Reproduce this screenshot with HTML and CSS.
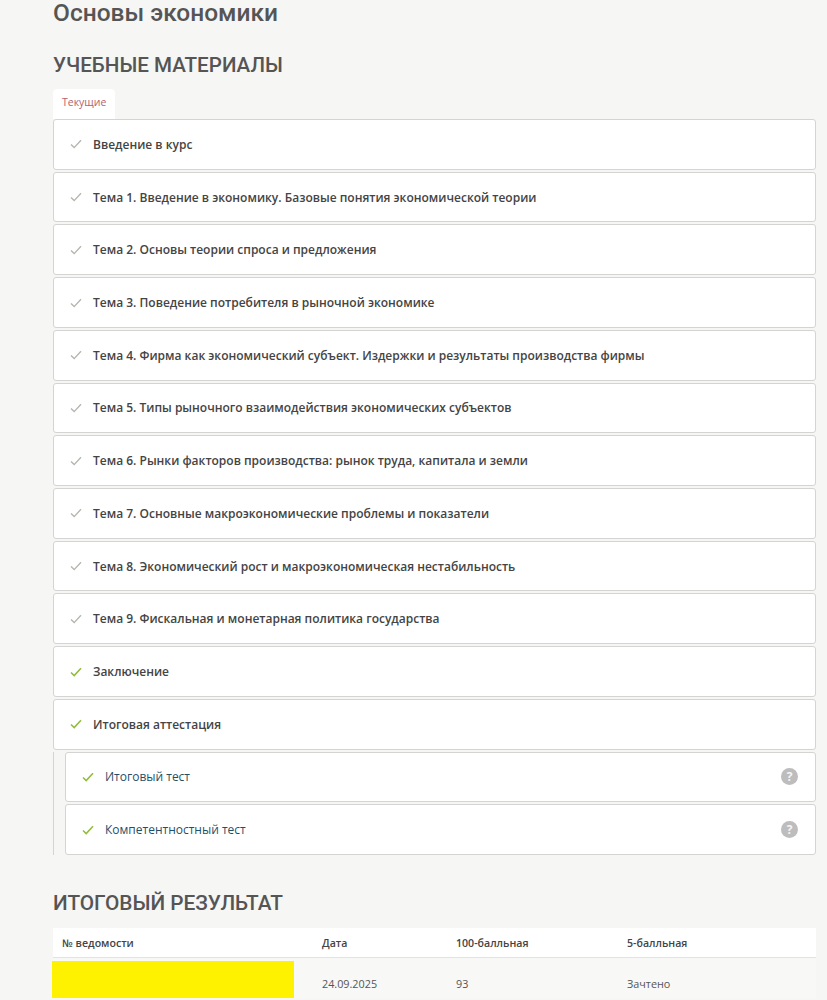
FILE: index.html
```html
<!DOCTYPE html>
<html lang="ru">
<head>
    <meta charset="UTF-8">
    <title>Основы экономики</title>
    <link rel="stylesheet" href="styles.css">
</head>
<body>
    <div class="page">
        <h1>Основы экономики</h1>
        <h2 class="materials-title">УЧЕБНЫЕ МАТЕРИАЛЫ</h2>
        <div class="tabs"><span class="tab">Текущие</span></div>

        <div class="topics">
            <div class="topic"><svg class="check" viewBox="0 0 12 10"><path d="M1 5.5 4.2 8.6 11 1.2"/></svg>Введение в курс</div>
            <div class="topic"><svg class="check" viewBox="0 0 12 10"><path d="M1 5.5 4.2 8.6 11 1.2"/></svg>Тема 1. Введение в экономику. Базовые понятия экономической теории</div>
            <div class="topic"><svg class="check" viewBox="0 0 12 10"><path d="M1 5.5 4.2 8.6 11 1.2"/></svg>Тема 2. Основы теории спроса и предложения</div>
            <div class="topic"><svg class="check" viewBox="0 0 12 10"><path d="M1 5.5 4.2 8.6 11 1.2"/></svg>Тема 3. Поведение потребителя в рыночной экономике</div>
            <div class="topic"><svg class="check" viewBox="0 0 12 10"><path d="M1 5.5 4.2 8.6 11 1.2"/></svg>Тема 4. Фирма как экономический субъект. Издержки и результаты производства фирмы</div>
            <div class="topic"><svg class="check" viewBox="0 0 12 10"><path d="M1 5.5 4.2 8.6 11 1.2"/></svg>Тема 5. Типы рыночного взаимодействия экономических субъектов</div>
            <div class="topic"><svg class="check" viewBox="0 0 12 10"><path d="M1 5.5 4.2 8.6 11 1.2"/></svg>Тема 6. Рынки факторов производства: рынок труда, капитала и земли</div>
            <div class="topic"><svg class="check" viewBox="0 0 12 10"><path d="M1 5.5 4.2 8.6 11 1.2"/></svg>Тема 7. Основные макроэкономические проблемы и показатели</div>
            <div class="topic"><svg class="check" viewBox="0 0 12 10"><path d="M1 5.5 4.2 8.6 11 1.2"/></svg>Тема 8. Экономический рост и макроэкономическая нестабильность</div>
            <div class="topic"><svg class="check" viewBox="0 0 12 10"><path d="M1 5.5 4.2 8.6 11 1.2"/></svg>Тема 9. Фискальная и монетарная политика государства</div>
            <div class="topic"><svg class="check done" viewBox="0 0 12 10"><path d="M1 5.5 4.2 8.6 11 1.2"/></svg>Заключение</div>
            <div class="topic"><svg class="check done" viewBox="0 0 12 10"><path d="M1 5.5 4.2 8.6 11 1.2"/></svg>Итоговая аттестация</div>
            <div class="subtopics">
                <div class="topic sub"><svg class="check done" viewBox="0 0 12 10"><path d="M1 5.5 4.2 8.6 11 1.2"/></svg>Итоговый тест<span class="help">?</span></div>
                <div class="topic sub"><svg class="check done" viewBox="0 0 12 10"><path d="M1 5.5 4.2 8.6 11 1.2"/></svg>Компетентностный тест<span class="help">?</span></div>
            </div>
        </div>

        <h2 class="result-title">ИТОГОВЫЙ РЕЗУЛЬТАТ</h2>
        <table class="results">
            <thead>
                <tr>
                    <th class="col-num">№ ведомости</th>
                    <th class="col-date">Дата</th>
                    <th class="col-hundred">100-балльная</th>
                    <th>5-балльная</th>
                </tr>
            </thead>
            <tbody>
                <tr>
                    <td class="hidden-cell"><div class="marker"></div></td>
                    <td>24.09.2025</td>
                    <td>93</td>
                    <td>Зачтено</td>
                </tr>
            </tbody>
        </table>
    </div>
</body>
</html>
```

FILE: styles.css
```css
html, body {
    height: 1000px;
    overflow: hidden;
}

body {
    margin: 0;
    font-family: "Open Sans", sans-serif;
    background-color: #f6f6f4;
    color: #444;
}

.page {
    padding: 0 11px 0 53px;
}

h1 {
    margin: 0;
    font-family: Roboto, sans-serif;
    font-size: 24.5px;
    line-height: 26px;
    font-weight: 500;
    color: #555;
}

h2 {
    margin: 0;
    font-family: Roboto, sans-serif;
    line-height: 26px;
    font-weight: 500;
    color: #555;
}

.materials-title {
    margin-top: 26px;
    font-size: 20.6px;
}

.tabs {
    display: flex;
    margin-top: 11px;
    height: 30px;
}

.tab {
    width: 62px;
    height: 30px;
    box-sizing: border-box;
    padding-left: 9px;
    font-size: 10.5px;
    line-height: 26px;
    color: #b5626c;
    background-color: #fff;
    border-radius: 4px 4px 0 0;
}

.topics {
    display: flex;
    flex-direction: column;
    gap: 2px;
}

.topic {
    display: flex;
    align-items: center;
    height: 50.72px;
    box-sizing: border-box;
    padding-left: 16px;
    font-size: 12px;
    font-weight: 600;
    color: #444;
    background-color: #fff;
    border: 1px solid #d4d4d2;
    border-radius: 3px;
}

.check {
    width: 12px;
    height: 10px;
    margin-right: 11px;
    flex-shrink: 0;
    fill: none;
    stroke: #b4b6b0;
    stroke-width: 1.4;
}

.check.done {
    stroke: #93bd3c;
    stroke-width: 1.6;
}

.subtopics {
    display: flex;
    flex-direction: column;
    gap: 2px;
    padding-left: 11px;
    border-left: 1px solid #d4d4d2;
}

.topic.sub {
    font-weight: 400;
    color: #1f5068;
}

.help {
    width: 17px;
    height: 17px;
    margin-left: auto;
    margin-right: 17px;
    border-radius: 50%;
    background-color: #bdbdbd;
    color: #f4f4f4;
    font-size: 12px;
    font-weight: 700;
    line-height: 17px;
    text-align: center;
}

.result-title {
    margin-top: 35px;
    font-size: 20.8px;
}

.results {
    width: 763px;
    margin-top: 12px;
    border-collapse: collapse;
    table-layout: fixed;
}

.results th {
    height: 29px;
    box-sizing: border-box;
    padding: 2px 0 0 9px;
    text-align: left;
    font-size: 10.6px;
    font-weight: 600;
    color: #444;
    background-color: #fff;
    border-bottom: 1px solid #e2e2e0;
}

.results td {
    height: 41px;
    box-sizing: border-box;
    padding: 12px 0 0 9px;
    font-size: 10.8px;
    color: #555;
    background-color: #f8f8f7;
}

.col-num {
    width: 260px;
}

.col-date {
    width: 134px;
}

.col-hundred {
    width: 171px;
}

.results td.hidden-cell {
    padding: 3px 0 0;
    vertical-align: top;
}

.marker {
    width: 242px;
    height: 37px;
    margin-left: -1px;
    background-color: #fff200;
}
```
